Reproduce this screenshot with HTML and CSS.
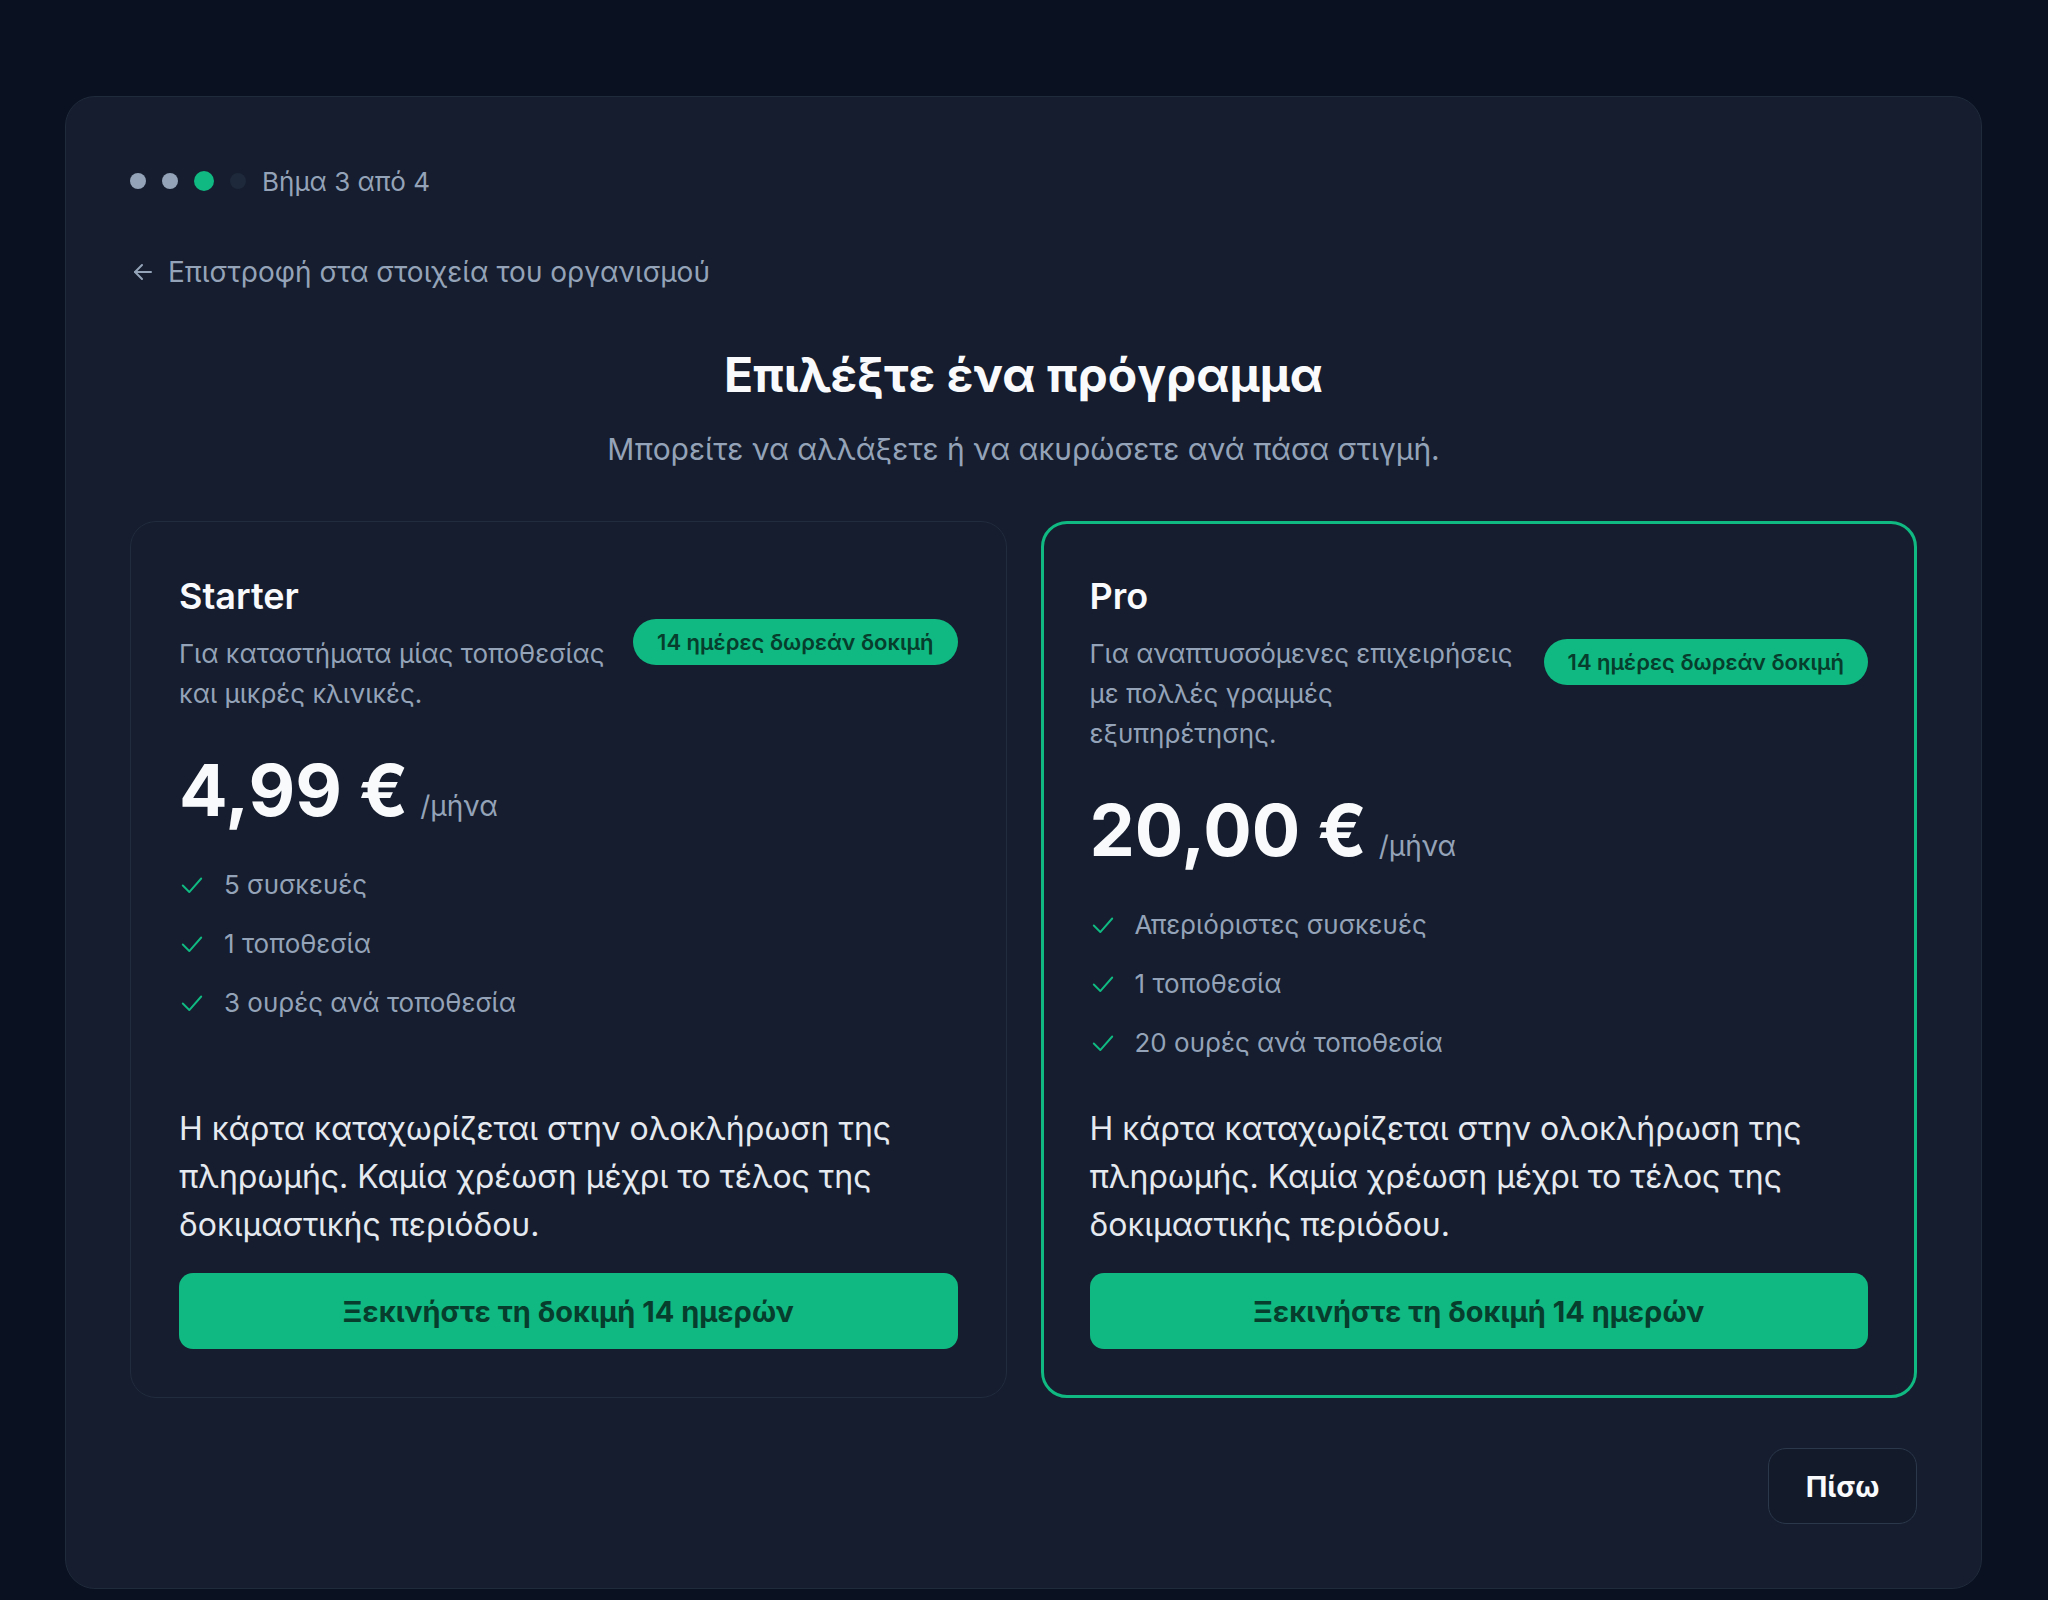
FILE: index.html
```html
<!DOCTYPE html>
<html lang="el">
<head>
<meta charset="utf-8">
<title>Επιλέξτε ένα πρόγραμμα</title>
<link rel="stylesheet" href="styles.css">
</head>
<body>
<main class="panel">
  <div class="steps">
    <span class="dot done"></span>
    <span class="dot done"></span>
    <span class="dot active"></span>
    <span class="dot todo"></span>
    <span class="steps-label">Βήμα 3 από 4</span>
  </div>

  <a class="back-link" href="#">
    <svg class="back-icon" viewBox="0 0 24 24" width="24" height="24" fill="none" stroke="currentColor" stroke-width="2" stroke-linecap="round" stroke-linejoin="round"><path d="M20 12H4"/><path d="M11 19l-7-7 7-7"/></svg>
    <span>Επιστροφή στα στοιχεία του οργανισμού</span>
  </a>

  <header class="intro">
    <h1 class="title">Επιλέξτε ένα πρόγραμμα</h1>
    <p class="subtitle">Μπορείτε να αλλάξετε ή να ακυρώσετε ανά πάσα στιγμή.</p>
  </header>

  <section class="plans">
    <article class="plan">
      <div class="plan-head">
        <div class="plan-info">
          <h2 class="plan-name">Starter</h2>
          <p class="plan-desc">Για καταστήματα μίας τοποθεσίας και μικρές κλινικές.</p>
        </div>
        <span class="badge">14 ημέρες δωρεάν δοκιμή</span>
      </div>
      <div class="price"><span class="amount">4,99 €</span><span class="period">/μήνα</span></div>
      <ul class="features">
        <li><svg class="check" viewBox="0 0 24 24" width="26" height="26" fill="none" stroke="currentColor" stroke-width="1.8" stroke-linecap="round" stroke-linejoin="round"><path d="M3.5 12.5l6 6L20.5 6"/></svg>5 συσκευές</li>
        <li><svg class="check" viewBox="0 0 24 24" width="26" height="26" fill="none" stroke="currentColor" stroke-width="1.8" stroke-linecap="round" stroke-linejoin="round"><path d="M3.5 12.5l6 6L20.5 6"/></svg>1 τοποθεσία</li>
        <li><svg class="check" viewBox="0 0 24 24" width="26" height="26" fill="none" stroke="currentColor" stroke-width="1.8" stroke-linecap="round" stroke-linejoin="round"><path d="M3.5 12.5l6 6L20.5 6"/></svg>3 ουρές ανά τοποθεσία</li>
      </ul>
      <div class="plan-foot">
        <p class="note">Η κάρτα καταχωρίζεται στην ολοκλήρωση της πληρωμής. Καμία χρέωση μέχρι το τέλος της δοκιμαστικής περιόδου.</p>
        <button class="cta" type="button">Ξεκινήστε τη δοκιμή 14 ημερών</button>
      </div>
    </article>

    <article class="plan selected">
      <div class="plan-head">
        <div class="plan-info">
          <h2 class="plan-name">Pro</h2>
          <p class="plan-desc">Για αναπτυσσόμενες επιχειρήσεις με πολλές γραμμές εξυπηρέτησης.</p>
        </div>
        <span class="badge">14 ημέρες δωρεάν δοκιμή</span>
      </div>
      <div class="price"><span class="amount">20,00 €</span><span class="period">/μήνα</span></div>
      <ul class="features">
        <li><svg class="check" viewBox="0 0 24 24" width="26" height="26" fill="none" stroke="currentColor" stroke-width="1.8" stroke-linecap="round" stroke-linejoin="round"><path d="M3.5 12.5l6 6L20.5 6"/></svg>Απεριόριστες συσκευές</li>
        <li><svg class="check" viewBox="0 0 24 24" width="26" height="26" fill="none" stroke="currentColor" stroke-width="1.8" stroke-linecap="round" stroke-linejoin="round"><path d="M3.5 12.5l6 6L20.5 6"/></svg>1 τοποθεσία</li>
        <li><svg class="check" viewBox="0 0 24 24" width="26" height="26" fill="none" stroke="currentColor" stroke-width="1.8" stroke-linecap="round" stroke-linejoin="round"><path d="M3.5 12.5l6 6L20.5 6"/></svg>20 ουρές ανά τοποθεσία</li>
      </ul>
      <div class="plan-foot">
        <p class="note">Η κάρτα καταχωρίζεται στην ολοκλήρωση της πληρωμής. Καμία χρέωση μέχρι το τέλος της δοκιμαστικής περιόδου.</p>
        <button class="cta" type="button">Ξεκινήστε τη δοκιμή 14 ημερών</button>
      </div>
    </article>
  </section>

  <footer class="actions">
    <button class="btn-back" type="button">Πίσω</button>
  </footer>
</main>
</body>
</html>
```

FILE: styles.css
```css
* { box-sizing: border-box; }

html, body {
  margin: 0;
  padding: 0;
}

body {
  background: #0a1120;
  font-family: Inter, "Noto Sans", "DejaVu Sans", sans-serif;
  color: #e2e8f0;
  padding: 96px 66px 12px 65px;
  min-height: 1600px;
}

.panel {
  background: #151d2e;
  border: 1px solid #1f2a3b;
  border-radius: 30px;
  padding: 64px;
}

.steps {
  display: flex;
  align-items: center;
  gap: 16px;
  height: 40px;
}

.dot {
  width: 16px;
  height: 16px;
  border-radius: 50%;
  background: #94a3b8;
}
.dot.active {
  width: 20px;
  height: 20px;
  background: #10b981;
}
.dot.todo { background: #1e293b; }

.steps-label {
  font-size: 26px;
  color: #94a3b8;
}

.back-link {
  display: inline-flex;
  align-items: center;
  gap: 13px;
  margin-top: 53px;
  font-size: 28px;
  line-height: 36px;
  color: #94a3b8;
  text-decoration: none;
}
.back-icon { margin-left: 1px; }

.intro {
  text-align: center;
  margin-top: 56px;
}

.title {
  margin: 0;
  font-size: 48px;
  line-height: 58px;
  font-weight: 700;
  color: #f8fafc;
}

.subtitle {
  margin: 25px 0 0;
  font-size: 30px;
  line-height: 40px;
  color: #94a3b8;
}

.plans {
  display: grid;
  grid-template-columns: 1fr 1fr;
  gap: 34px;
  margin-top: 52px;
}

.plan {
  display: flex;
  flex-direction: column;
  border: 1px solid #212c3e;
  border-radius: 26px;
  padding: 48px;
  background: #151d2e;
}
.plan.selected {
  border: 3px solid #10b981;
  padding: 46px;
}

.plan-head {
  display: flex;
  align-items: center;
  gap: 24px;
}

.plan-info { flex: 1; min-width: 0; }

.plan-name {
  margin: 0;
  font-size: 36px;
  line-height: 52px;
  font-weight: 600;
  color: #f8fafc;
}

.plan-desc {
  margin: 12px 0 0;
  font-size: 26px;
  line-height: 40px;
  color: #94a3b8;
}

.badge {
  flex: none;
  display: inline-flex;
  align-items: center;
  height: 46px;
  padding: 0 24px;
  border-radius: 23px;
  background: #10b981;
  color: #063d2c;
  font-size: 22px;
  font-weight: 600;
}

.price {
  display: flex;
  align-items: baseline;
  gap: 12px;
  margin-top: 40px;
}

.amount {
  font-size: 72px;
  line-height: 72px;
  font-weight: 700;
  color: #f8fafc;
}

.period {
  font-size: 28px;
  color: #94a3b8;
}

.features {
  list-style: none;
  margin: 40px 0 0;
  padding: 0;
  display: flex;
  flex-direction: column;
  gap: 21px;
}

.features li {
  display: flex;
  align-items: center;
  gap: 19px;
  font-size: 26px;
  line-height: 38px;
  color: #94a3b8;
}

.check {
  color: #10b981;
  flex: none;
}

.plan-foot {
  margin-top: auto;
  padding-top: 43px;
}

.note {
  margin: 0;
  font-size: 32px;
  line-height: 48px;
  color: #e5e9f0;
}

.cta {
  display: block;
  width: 100%;
  height: 76px;
  margin-top: 24px;
  border: 0;
  border-radius: 14px;
  background: #10b981;
  color: #063d2c;
  font-family: inherit;
  font-size: 29px;
  font-weight: 700;
}

.actions {
  display: flex;
  justify-content: flex-end;
  margin-top: 50px;
}

.btn-back {
  height: 76px;
  width: 149px;
  border: 1px solid #2b384b;
  border-radius: 18px;
  background: #131b2b;
  color: #f8fafc;
  font-family: inherit;
  font-size: 29px;
  font-weight: 700;
}
```
